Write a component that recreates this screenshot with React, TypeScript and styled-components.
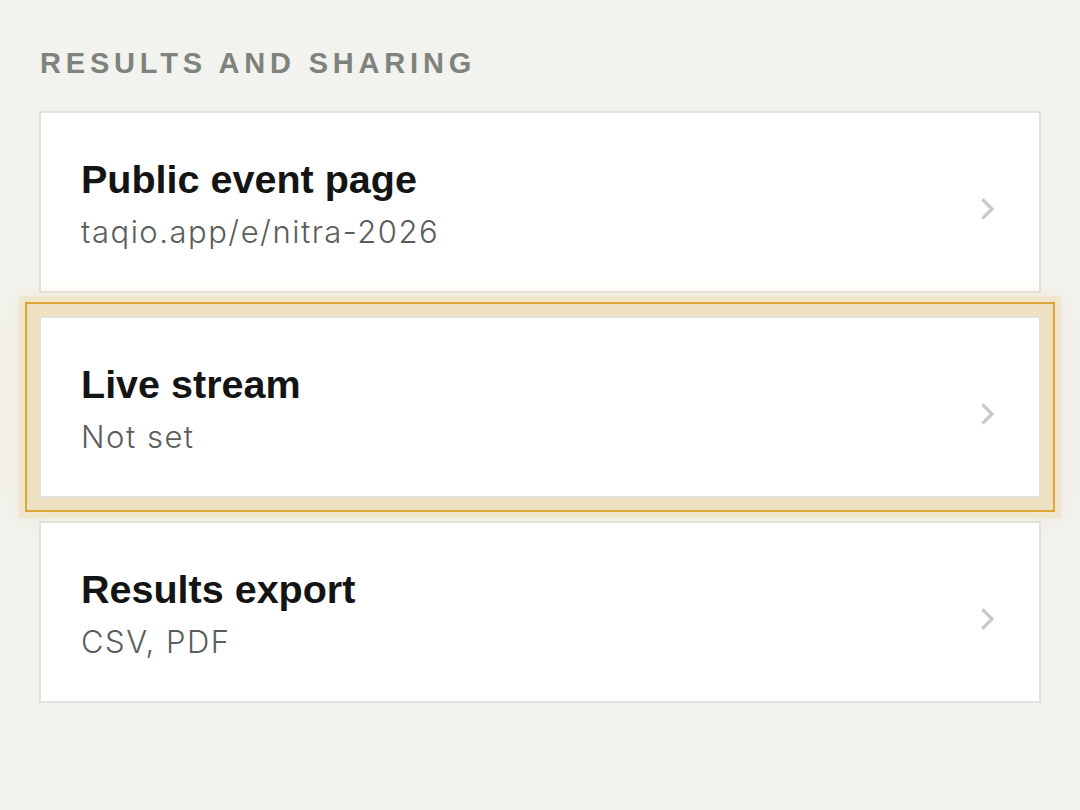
import styled, { createGlobalStyle } from "styled-components";

const GlobalStyle = createGlobalStyle`
  html, body {
    margin: 0;
    padding: 0;
    background: #f2f2ee;
  }
  * {
    box-sizing: border-box;
  }
`;

const Page = styled.main`
  min-height: 810px;
  padding: 46px 39px 0;
  background: #f2f2ee;
  display: flex;
  flex-direction: column;
`;

const SectionTitle = styled.h2`
  margin: 0 0 31px 1px;
  font-family: "Liberation Sans", Arial, sans-serif;
  font-weight: 700;
  font-size: 29px;
  line-height: 34px;
  letter-spacing: 4.8px;
  color: #7e837d;
  text-transform: uppercase;
`;

const List = styled.div`
  display: flex;
  flex-direction: column;
  gap: 23px;
`;

const Row = styled.button<{ $focused?: boolean }>`
  all: unset;
  box-sizing: border-box;
  height: 182px;
  display: flex;
  align-items: center;
  justify-content: space-between;
  padding: 4px 44px 0 40px;
  background: #ffffff;
  border: 2px solid #e2e2dc;
  cursor: pointer;
  ${({ $focused }) =>
    $focused &&
    `
    outline: 2px solid #dba637;
    outline-offset: 12px;
    box-shadow:
      0 0 0 14px #ede1c2,
      0 0 0 20px #f0e6cd,
      0 0 22px 18px rgba(236, 214, 160, 0.35);
  `}
`;

const Text = styled.div`
  display: flex;
  flex-direction: column;
`;

const Label = styled.span`
  font-family: "Liberation Sans", Arial, sans-serif;
  font-weight: 700;
  font-size: 39.5px;
  line-height: 44px;
  color: #141414;
`;

const Value = styled.span`
  margin-top: 12px;
  font-family: Inter, Roboto, "Liberation Sans", sans-serif;
  font-weight: 300;
  font-size: 31px;
  line-height: 38px;
  letter-spacing: 1.5px;
  color: #5a5e5a;
`;

const Chevron = styled.svg`
  width: 14px;
  height: 22px;
  margin-top: 10px;
  flex-shrink: 0;
`;

const rows = [
  { label: "Public event page", value: "taqio.app/e/nitra-2026" },
  { label: "Live stream", value: "Not set", focused: true },
  { label: "Results export", value: "CSV, PDF" },
];

export default function App() {
  return (
    <>
      <GlobalStyle />
      <Page>
        <SectionTitle>Results and sharing</SectionTitle>
        <List>
          {rows.map((row) => (
            <Row key={row.label} $focused={row.focused}>
              <Text>
                <Label>{row.label}</Label>
                <Value>{row.value}</Value>
              </Text>
              <Chevron viewBox="0 0 14 22" fill="none">
                <polyline
                  points="2.5,2.5 11,11 2.5,19.5"
                  stroke="#c9c9c3"
                  strokeWidth="3.2"
                  strokeLinecap="square"
                />
              </Chevron>
            </Row>
          ))}
        </List>
      </Page>
    </>
  );
}
